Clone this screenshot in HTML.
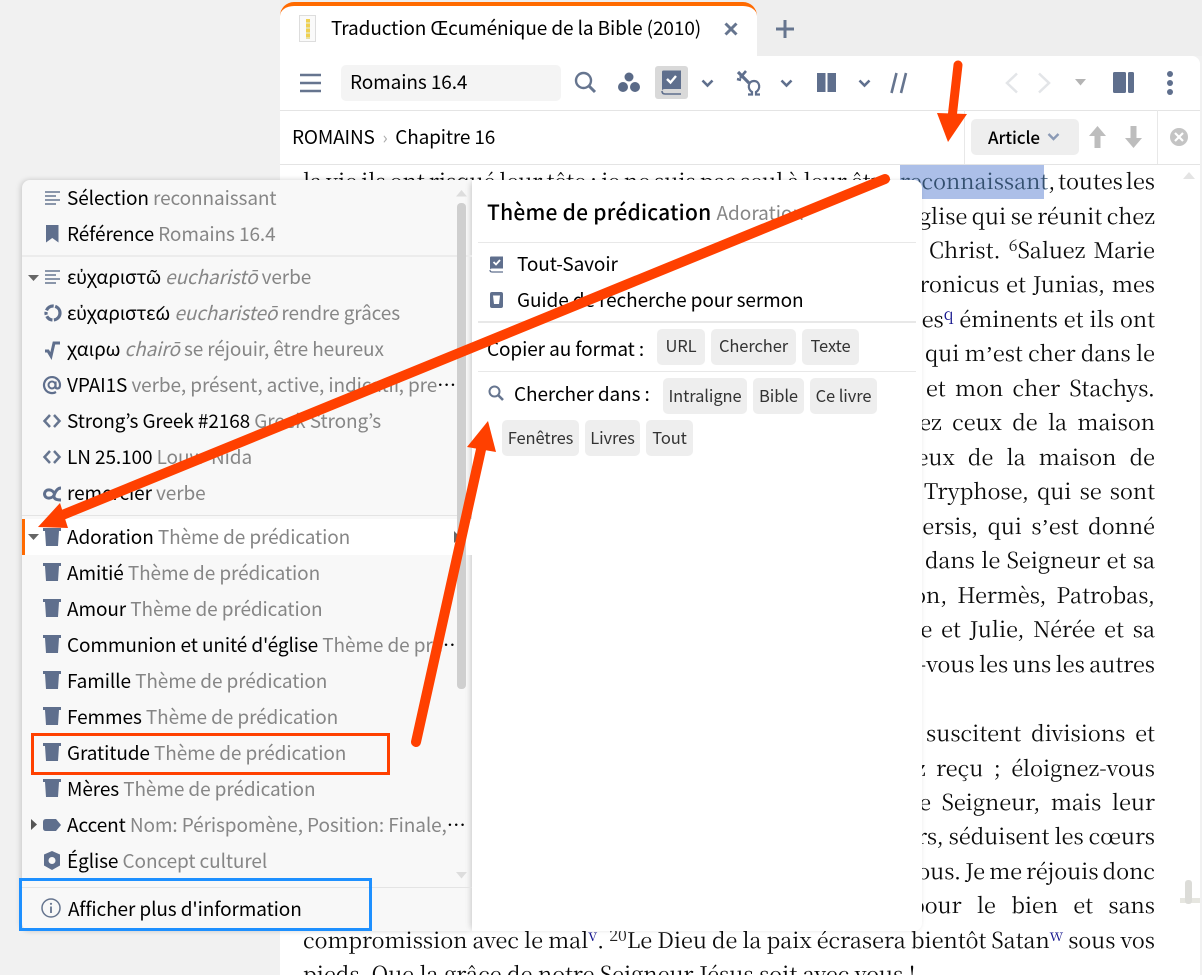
<!DOCTYPE html>
<html><head><meta charset="utf-8"><style>
html,body{margin:0;padding:0;width:1202px;height:975px;overflow:hidden;background:#f1f1f1}
body{position:relative;font-family:"Noto Sans CJK JP","Liberation Sans",sans-serif;color:#000;letter-spacing:-.1px}
.a{position:absolute;white-space:nowrap}
.l{position:absolute;right:47px;font:21.6px/34px "Noto Serif CJK SC","Liberation Serif",serif;text-align:justify;text-align-last:justify;white-space:normal;height:34px;overflow:visible;color:#0a0a0a;letter-spacing:0;word-spacing:-4px}
.l sup{font-size:16px;line-height:0;color:#14148c;position:relative;top:1px}
.l sup.n{color:#222}
.l b{font:21.6px/34px "Liberation Serif",serif}
.r{position:absolute;left:67px;width:398px;height:36px;line-height:34px;font-size:19px;white-space:nowrap;overflow:hidden;text-overflow:ellipsis}
.r i,.g{color:#868686}
.r i{font-style:italic}
.g{font-style:normal}
.ic{position:absolute;left:42px;width:20px;height:20px}
.b{position:absolute;background:#eee;border-radius:5px;height:36px;line-height:33px;font-size:16.5px;text-align:center;color:#333}
.p{position:absolute;font-size:19px;white-space:nowrap;line-height:28px}
svg{position:absolute;overflow:visible}
</style></head><body>
<div class="a" style="left:280px;top:0;width:922px;height:56px;background:#eee"></div>
<div class="a" style="left:280px;top:2px;width:477px;height:54px;background:#fff;border-top:4px solid #ff6a00;border-radius:14px 14px 0 0;box-sizing:border-box"></div>
<div class="a" style="left:280px;top:56px;width:920px;height:919px;background:#fff;border-radius:0 8px 0 0"></div>
<div class="a" style="left:299px;top:15px;width:17px;height:27px;background:#fafafa;border:1px solid #ddd;box-sizing:border-box"></div>
<div class="a" style="left:306px;top:19px;width:4px;height:20px;background:repeating-linear-gradient(#f0d050 0 3px,#e8e0a0 3px 5px)"></div>
<div class="a" style="left:331px;top:13px;font-size:19px;line-height:30px">Traduction Œcuménique de la Bible (2010)</div>
<svg style="left:724px;top:22px" width="14" height="14"><path d="M1.5 1.5 12.5 12.5M12.5 1.5 1.5 12.5" stroke="#66758f" stroke-width="3"/></svg>
<svg style="left:776px;top:20px" width="18" height="18"><path d="M9 0V18M0 9H18" stroke="#66758f" stroke-width="3"/></svg>
<div class="a" style="left:280px;top:110px;width:920px;height:1px;background:#e4e4e4"></div>
<div class="a" style="left:280px;top:164px;width:920px;height:1px;background:#e4e4e4"></div>
<svg style="left:300px;top:73px" width="22" height="20"><path d="M0 2H21M0 10H21M0 18H21" stroke="#66758f" stroke-width="2.6"/></svg>
<div class="a" style="left:341px;top:65px;width:220px;height:36px;background:#f4f4f4;border-radius:5px"></div>
<div class="a" style="left:350px;top:68px;font-size:19px;line-height:28px">Romains 16.4</div>
<svg style="left:574px;top:71px" width="24" height="24"><circle cx="9.5" cy="9.5" r="7.5" fill="none" stroke="#66758f" stroke-width="2.4"/><path d="M15 15 21 21" stroke="#66758f" stroke-width="3"/></svg>
<svg style="left:618px;top:72px" width="22" height="22"><circle cx="11" cy="5" r="4.5" fill="#5a6a87"/><circle cx="5" cy="15" r="5" fill="#5a6a87"/><circle cx="17" cy="15" r="5" fill="#5a6a87"/></svg>
<div class="a" style="left:655px;top:66px;width:33px;height:33px;background:#d9d9d9;border-radius:3px"></div>
<svg style="left:661px;top:70px" width="21" height="25"><path d="M1 2Q1 .5 2.500 .5H20V19H4Q1 19 1 21Z" fill="#5f6f8d"/><path d="M1 21Q1 24 4 24H20" fill="none" stroke="#5f6f8d" stroke-width="1.600"/><path d="M6 9 9.500 12.500 15 6" fill="none" stroke="#fff" stroke-width="2.400"/></svg>
<svg style="left:701px;top:79px" width="13" height="9"><path d="M1.500 1.500 6.500 6.500 11.500 1.500" fill="none" stroke="#5f6f8d" stroke-width="2.600"/></svg>
<svg style="left:736px;top:70px" width="26" height="26"><path d="M2 2 13 13" fill="none" stroke="#5f6f8d" stroke-width="3.200"/><path d="M10 1 4 8M1 9 5 10" fill="none" stroke="#5f6f8d" stroke-width="2.600"/><path d="M12 24.500H16V22C11 19 12 11 18 11C24 11 25 19 20 22V24.500H24" fill="none" stroke="#5f6f8d" stroke-width="2.200"/></svg>
<svg style="left:780px;top:79px" width="13" height="9"><path d="M1.500 1.500 6.500 6.500 11.500 1.500" fill="none" stroke="#5f6f8d" stroke-width="2.600"/></svg>
<svg style="left:817px;top:73px" width="19" height="19"><rect width="8.500" height="19" fill="#5f6f8d"/><rect x="10.500" width="8.500" height="19" fill="#5f6f8d"/></svg>
<svg style="left:858px;top:79px" width="13" height="9"><path d="M1.500 1.500 6.500 6.500 11.500 1.500" fill="none" stroke="#5f6f8d" stroke-width="2.600"/></svg>
<svg style="left:890px;top:73px" width="18" height="20"><path d="M6.500 0 1.500 20M16 0 11 20" stroke="#66758f" stroke-width="2.600"/></svg>
<svg style="left:1005px;top:72px" width="14" height="22"><path d="M12 1.500 2 11 12 20.500" fill="none" stroke="#e3e5e8" stroke-width="2.500"/></svg>
<svg style="left:1037px;top:72px" width="14" height="22"><path d="M2 1.500 12 11 2 20.500" fill="none" stroke="#e3e5e8" stroke-width="2.500"/></svg>
<svg style="left:1075px;top:79px" width="11" height="7"><path d="M0 0H11L5.500 6.500Z" fill="#b4b4b4"/></svg>
<svg style="left:1113px;top:72px" width="21" height="21"><rect width="13" height="21" rx="1.500" fill="#5f6f8d"/><rect x="15" width="6" height="21" rx="1.500" fill="#5f6f8d"/></svg>
<svg style="left:1164px;top:70px" width="12" height="26"><circle cx="6" cy="4" r="3" fill="#5f6f8d"/><circle cx="6" cy="13" r="3" fill="#5f6f8d"/><circle cx="6" cy="22" r="3" fill="#5f6f8d"/></svg>
<div class="a" style="left:292px;top:123px;font-size:19px;line-height:28px;letter-spacing:-.15px">ROMAINS <span style="color:#aaa;font-size:17px">&nbsp;›&nbsp;</span> Chapitre 16</div>
<div class="a" style="left:964px;top:110px;width:1px;height:54px;background:#e8e8e8"></div>
<div class="a" style="left:1157px;top:110px;width:1px;height:54px;background:#e8e8e8"></div>
<div class="a" style="left:971px;top:119px;width:108px;height:36px;background:#eee;border-radius:5px"></div>
<div class="a" style="left:988px;top:123px;font-size:17px;line-height:28px;font-weight:500">Article</div>
<svg style="left:1047px;top:133px" width="13" height="8"><path d="M1.500 1 6.500 6 11.500 1" fill="none" stroke="#8b9ab5" stroke-width="2.400"/></svg>
<svg style="left:1089px;top:126px" width="17" height="22"><path d="M8.500 0 17 10H11.500V22H5.500V10H0Z" fill="#bdbdbd"/></svg>
<svg style="left:1125px;top:126px" width="17" height="22"><path d="M8.500 22 17 12H11.500V0H5.500V12H0Z" fill="#bdbdbd"/></svg>
<svg style="left:1170px;top:128px" width="18" height="18"><circle cx="9" cy="9" r="9" fill="#c4c4c4"/><path d="M5 5 13 13M13 5 5 13" stroke="#fff" stroke-width="2.200"/></svg>
<div class="a" style="left:900px;top:165px;width:144px;height:34px;background:#acbfe8"></div>
<div class="l" style="left:303px;right:310px;top:164px">la vie ils ont risqué leur tête ; je ne suis pas seul à leur être</div>
<div class="l" style="left:900px;top:164px"><span style="color:#34506f">reconnaissant</span>, toutes les</div>
<div class="l" style="left:905px;top:199px">Église qui se réunit chez</div>
<div class="l" style="left:929px;top:233px">Christ. <sup class="n">6</sup>Saluez Marie</div>
<div class="l" style="left:876px;top:267px">Andronicus et Junias, mes</div>
<div class="l" style="left:866px;top:302px">apôtres<sup>q</sup> éminents et ils ont</div>
<div class="l" style="left:925px;top:336px">qui m<b>’</b>est cher dans le</div>
<div class="l" style="left:926px;top:371px">et mon cher Stachys.</div>
<div class="l" style="left:874px;top:405px">Saluez ceux de la maison</div>
<div class="l" style="left:905px;top:440px">ceux de la maison de</div>
<div class="l" style="left:924px;top:474px">Tryphose, qui se sont</div>
<div class="l" style="left:909px;top:509px">Persis, qui s<b>’</b>est donné</div>
<div class="l" style="left:925px;top:543px">dans le Seigneur et sa</div>
<div class="l" style="left:854px;top:578px">Phlégon, Hermès, Patrobas,</div>
<div class="l" style="left:819px;top:612px">Philologue et Julie, Nérée et sa</div>
<div class="l" style="left:851px;top:647px">Saluez-vous les uns les autres</div>
<div class="l" style="left:926px;top:716px">suscitent divisions et</div>
<div class="l" style="left:880px;top:751px">avez reçu ; éloignez-vous</div>
<div class="l" style="left:912px;top:785px">le Seigneur, mais leur</div>
<div class="l" style="left:849px;top:819px">flatteurs, séduisent les cœurs</div>
<div class="l" style="left:906px;top:854px">vous. Je me réjouis donc</div>
<div class="l" style="left:911px;top:888px">pour le bien et sans</div>
<div class="l" style="left:303px;top:923px">compromission avec le mal<sup>v</sup>. <sup class="n">20</sup>Le Dieu de la paix écrasera bientôt Satan<sup>w</sup> sous vos</div>
<div class="l" style="left:303px;top:957px;text-align-last:left;word-spacing:0">pieds. Que la grâce de notre Seigneur Jésus soit avec vous !</div>
<svg style="left:1180px;top:880px" width="20" height="26"><rect x="0" y="18" width="20" height="5" fill="#e6e6e0"/><rect x="5" width="7" height="24" rx="3" fill="#dcdcd8"/></svg>
<svg style="left:1183px;top:171px" width="16" height="9"><path d="M0 8H12L6 1Z" fill="#e4e4e4"/></svg>

<div class="a" style="left:22px;top:180px;width:450px;height:751px;background:#f8f8f8;border-radius:8px 0 0 8px;box-shadow:-2px 0 6px rgba(0,0,0,.1),0 0 6px rgba(0,0,0,.08)"></div>
<div class="a" style="left:472px;top:180px;width:450px;height:751px;background:#fff;border-radius:0 8px 8px 0;box-shadow:-5px 0 6px -3px rgba(0,0,0,.12),0 0 4px rgba(0,0,0,.08)"></div>
<div class="a" style="left:22px;top:255px;width:450px;height:2px;background:#ececec"></div>
<div class="a" style="left:22px;top:515px;width:450px;height:1px;background:#e4e4e4"></div>
<div class="a" style="left:22px;top:519px;width:450px;height:36px;background:#fff"></div>
<div class="a" style="left:22px;top:519px;width:3px;height:36px;background:#ff6a00"></div>
<div class="a" style="left:22px;top:887px;width:450px;height:1px;background:#e4e4e4"></div>
<div class="r" style="top:181px">Sélection <span class="g">reconnaissant</span></div>
<div class="r" style="top:217px">Référence <span class="g">Romains 16.4</span></div>
<div class="r" style="top:260px">εὐχαριστῶ <i>eucharistō</i> <span class="g">verbe</span></div>
<div class="r" style="top:296px">εὐχαριστέω <i>eucharisteō</i> <span class="g">rendre grâces</span></div>
<div class="r" style="top:332px">χαιρω <i>chairō</i> <span class="g">se réjouir, être heureux</span></div>
<div class="r" style="top:368px;width:392px">VPAI1S <span class="g">verbe, présent, active, indicatif, première personne</span></div>
<div class="r" style="top:404px">Strong’s Greek #2168 <span class="g">Greek Strong’s</span></div>
<div class="r" style="top:440px">LN 25.100 <span class="g">Louw-Nida</span></div>
<div class="r" style="top:476px">remercier <span class="g">verbe</span></div>
<div class="r" style="top:520px">Adoration <span class="g">Thème de prédication</span></div>
<div class="r" style="top:556px">Amitié <span class="g">Thème de prédication</span></div>
<div class="r" style="top:592px">Amour <span class="g">Thème de prédication</span></div>
<div class="r" style="top:628px;width:396px">Communion et unité d'église <span class="g">Thème de prédication</span></div>
<div class="r" style="top:664px">Famille <span class="g">Thème de prédication</span></div>
<div class="r" style="top:700px">Femmes <span class="g">Thème de prédication</span></div>
<div class="r" style="top:736px">Gratitude <span class="g">Thème de prédication</span></div>
<div class="r" style="top:772px">Mères <span class="g">Thème de prédication</span></div>
<div class="r" style="top:808px;width:401px">Accent <span class="g">Nom: Périspomène, Position: Finale, Voix: Active</span></div>
<div class="r" style="top:844px">Église <span class="g">Concept culturel</span></div>
<div class="a" style="left:68px;top:895px;font-size:19px;line-height:28px">Afficher plus d'information</div>

<svg style="left:45px;top:191px" width="16" height="15"><path d="M0 1H15M0 5H11M0 9H15M0 13H11" stroke="#66758f" stroke-width="1.400"/></svg>
<svg style="left:46px;top:225px" width="13" height="18"><path d="M0 0H12.500V17.500L6.250 13 0 17.500Z" fill="#5f6f8d"/></svg>
<svg style="left:28px;top:275px" width="11" height="6"><path d="M0 0H11L5.500 6Z" fill="#666"/></svg>
<svg style="left:45px;top:270px" width="16" height="15"><path d="M0 1H15M0 5H11M0 9H15M0 13H11" stroke="#66758f" stroke-width="1.400"/></svg>
<svg style="left:44px;top:304px" width="18" height="18"><circle cx="9" cy="9" r="7" fill="none" stroke="#5f6f8d" stroke-width="3.200" stroke-dasharray="10 1.500 7 1.500 3 1.500 9 1.500"/></svg>
<svg style="left:45px;top:340px" width="16" height="18"><path d="M0 11H3L6 16 9 3H15" fill="none" stroke="#5f6f8d" stroke-width="3"/></svg>
<svg style="left:43px;top:376px" width="18" height="18"><circle cx="9" cy="9" r="3.500" fill="none" stroke="#5f6f8d" stroke-width="2"/><path d="M12.500 5.500V10.500Q12.500 12.500 14.500 12.500Q17 12.500 17 9A8 8 0 1 0 13 16" fill="none" stroke="#5f6f8d" stroke-width="2.200"/></svg>
<svg style="left:43px;top:414px" width="18" height="14"><path d="M7 1 1.500 7 7 13M11 1 16.500 7 11 13" fill="none" stroke="#66758f" stroke-width="2.500"/></svg>
<svg style="left:43px;top:450px" width="18" height="14"><path d="M7 1 1.500 7 7 13M11 1 16.500 7 11 13" fill="none" stroke="#66758f" stroke-width="2.500"/></svg>
<svg style="left:43px;top:487px" width="19" height="14"><path d="M18 1Q14 1 11.500 7T18 13M11.500 7C10 2 2 1 1.500 7C2 13 10 12 11.500 7" fill="none" stroke="#5f6f8d" stroke-width="3"/></svg>
<svg style="left:28px;top:534px" width="11" height="6"><path d="M0 0H11L5.500 6Z" fill="#666"/></svg>
<svg style="left:43px;top:528px" width="18" height="18"><path d="M0 0H18V3H16L15 18H3L2 3H0Z" fill="#5f6f8d"/></svg>
<svg style="left:43px;top:563px" width="18" height="18"><path d="M0 0H18V3H16L15 18H3L2 3H0Z" fill="#5f6f8d"/></svg>
<svg style="left:43px;top:599px" width="18" height="18"><path d="M0 0H18V3H16L15 18H3L2 3H0Z" fill="#5f6f8d"/></svg>
<svg style="left:43px;top:635px" width="18" height="18"><path d="M0 0H18V3H16L15 18H3L2 3H0Z" fill="#5f6f8d"/></svg>
<svg style="left:43px;top:671px" width="18" height="18"><path d="M0 0H18V3H16L15 18H3L2 3H0Z" fill="#5f6f8d"/></svg>
<svg style="left:43px;top:707px" width="18" height="18"><path d="M0 0H18V3H16L15 18H3L2 3H0Z" fill="#5f6f8d"/></svg>
<svg style="left:43px;top:743px" width="18" height="18"><path d="M0 0H18V3H16L15 18H3L2 3H0Z" fill="#5f6f8d"/></svg>
<svg style="left:43px;top:779px" width="18" height="18"><path d="M0 0H18V3H16L15 18H3L2 3H0Z" fill="#5f6f8d"/></svg>
<svg style="left:31px;top:819px" width="6" height="11"><path d="M0 0V11L6 5.500Z" fill="#555"/></svg>
<svg style="left:43px;top:819px" width="18" height="12"><path d="M3 0H13L18 6 13 12H3Q0 12 0 9V3Q0 0 3 0Z" fill="#5f6f8d"/></svg>
<svg style="left:44px;top:851px" width="16" height="19"><path d="M8 0 16 3.500V14.500L8 19 0 14.500V3.500Z" fill="#5f6f8d"/><circle cx="8" cy="9.500" r="3.500" fill="#f8f8f8"/></svg>
<svg style="left:41px;top:898px" width="20" height="20"><circle cx="10" cy="10" r="9" fill="none" stroke="#66758f" stroke-width="1.500"/><path d="M10 8.500V15" stroke="#66758f" stroke-width="1.800"/><circle cx="10" cy="5.800" r="1.100" fill="#66758f"/></svg>

<div class="a" style="left:457px;top:203px;width:9px;height:486px;background:#cfcfcf;border-radius:4px"></div>
<svg style="left:456px;top:190px" width="11" height="7"><path d="M0 6.500H11L5.500 0Z" fill="#ddd"/></svg>
<svg style="left:456px;top:872px" width="11" height="7"><path d="M0 0H11L5.500 6.500Z" fill="#ddd"/></svg>
<svg style="left:454px;top:531px" width="6" height="12"><path d="M0 0V12L6 6Z" fill="#666"/></svg>

<div class="p" style="left:487px;top:198px;font-weight:500;font-size:21px;letter-spacing:.25px">Thème de prédication <span class="g" style="font-weight:400;font-size:19px;letter-spacing:0">Adoration</span></div>
<div class="a" style="left:478px;top:242px;width:438px;height:1px;background:#e8e8e8"></div>
<div class="a" style="left:478px;top:321px;width:438px;height:2px;background:#e8e8e8"></div>
<div class="a" style="left:478px;top:371px;width:438px;height:1px;background:#e8e8e8"></div>
<svg style="left:490px;top:256px" width="14" height="17"><path d="M0 1.500Q0 .5 1 .5H13V12.500H2Q0 12.500 0 14Z" fill="#5f6f8d"/><path d="M0 14Q0 16 2 16H13" fill="none" stroke="#5f6f8d" stroke-width="1.200"/><path d="M3.500 6 6 8.500 10 4" fill="none" stroke="#fff" stroke-width="1.800"/></svg>
<div class="p" style="left:517px;top:250px">Tout-Savoir</div>
<svg style="left:490px;top:292px" width="13" height="16"><path d="M0 2Q0 0 2 0H11Q13 0 13 2V14Q13 16 11 16H2Q0 16 0 14Z" fill="#5f6f8d"/><path d="M3 3.500H10L9 12H4Z" fill="#fff"/></svg>
<div class="p" style="left:517px;top:286px">Guide de recherche pour sermon</div>
<div class="p" style="left:487px;top:335px">Copier au format :</div>
<div class="b" style="left:657px;top:329px;width:48px">URL</div>
<div class="b" style="left:711px;top:329px;width:85px">Chercher</div>
<div class="b" style="left:802px;top:329px;width:57px">Texte</div>
<svg style="left:488px;top:385px" width="16" height="16"><circle cx="6.500" cy="6.500" r="5" fill="none" stroke="#66758f" stroke-width="2"/><path d="M10 10 15 15" stroke="#66758f" stroke-width="2.600"/></svg>
<div class="p" style="left:514px;top:380px">Chercher dans :</div>
<div class="b" style="left:663px;top:378px;width:84px;line-height:35px">Intraligne</div>
<div class="b" style="left:753px;top:378px;width:51px;line-height:35px">Bible</div>
<div class="b" style="left:810px;top:378px;width:67px;line-height:35px">Ce livre</div>
<div class="b" style="left:502px;top:420px;width:77px;line-height:35px">Fenêtres</div>
<div class="b" style="left:585px;top:420px;width:55px;line-height:35px">Livres</div>
<div class="b" style="left:646px;top:420px;width:47px;line-height:35px">Tout</div>

<div class="a" style="left:31px;top:733px;width:359px;height:42px;border:3px solid #ff4000;box-sizing:border-box"></div>
<div class="a" style="left:19px;top:878px;width:353px;height:53px;border:3px solid #1e90ff;box-sizing:border-box"></div>
<svg style="left:0;top:0" width="1202" height="975">
<path d="M958 65 952 118" stroke="#ff4000" stroke-width="9" stroke-linecap="round"/><path d="M937 113 967 114 948 142Z" fill="#ff4000"/>
<path d="M885 179 60 516" stroke="#ff4000" stroke-width="10" stroke-linecap="round"/><path d="M38 527 60 503 68 528Z" fill="#ff4000"/>
<path d="M416 742 482 445" stroke="#ff4000" stroke-width="10" stroke-linecap="round"/><path d="M488 421 467 447 496 452Z" fill="#ff4000"/>
</svg>
</body></html>
